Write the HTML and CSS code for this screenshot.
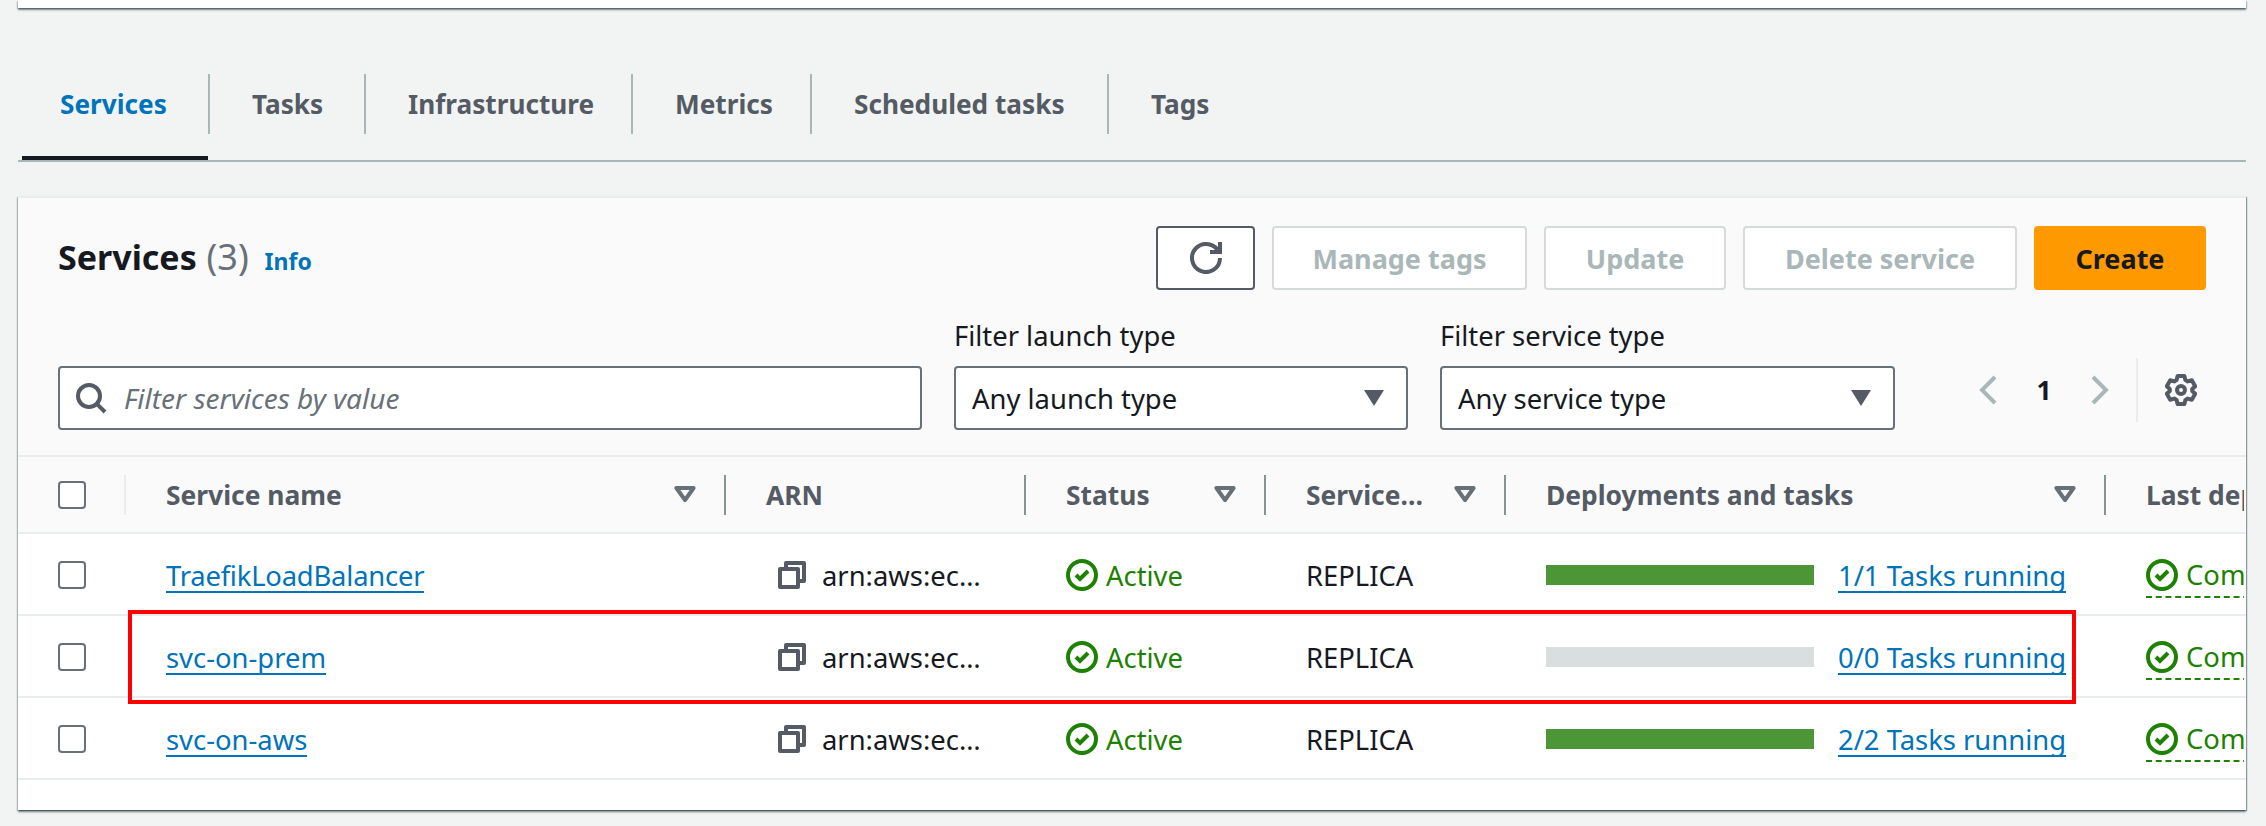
FILE: index.html
```html
<!DOCTYPE html>
<html lang="en">
<head>
<meta charset="utf-8">
<title>Services</title>
<link rel="stylesheet" href="styles.css">
</head>
<body>
<svg class="defs" width="0" height="0" aria-hidden="true">
  <symbol id="i-caret" viewBox="0 0 16 16"><path d="M3.7 4.5h8.6L8 10.5z" fill="none" stroke="currentColor" stroke-width="2" stroke-linejoin="round"/></symbol>
  <symbol id="i-copy" viewBox="0 0 16 16"><g fill="none" stroke="currentColor" stroke-width="2" stroke-linejoin="round"><path d="M2 5h9v9H2z"/><path d="M5 4V2h9v9h-2"/></g></symbol>
  <symbol id="i-ok" viewBox="0 0 16 16"><g fill="none" stroke="currentColor" stroke-width="2"><circle cx="8" cy="8" r="7"/><path d="M5 8l2 2 4-4"/></g></symbol>
  <symbol id="i-down" viewBox="0 0 20 16"><path d="M0 0h20L10 16z" fill="currentColor"/></symbol>
</svg>
<div class="topcard"></div>
<nav class="tabs">
  <a class="tab active">Services</a>
  <a class="tab">Tasks</a>
  <a class="tab">Infrastructure</a>
  <a class="tab">Metrics</a>
  <a class="tab">Scheduled tasks</a>
  <a class="tab last">Tags</a>
</nav>
<section class="card">
  <div class="actions">
    <h2 class="title">Services <span class="count">(3)</span> <a class="info">Info</a></h2>
    <button class="btn refresh" aria-label="Refresh"><svg class="ic32" viewBox="0 0 16 16"><g fill="none" stroke="currentColor" stroke-width="2"><path d="M10 5h5V0"/><path d="M15 8a7 7 0 1 1-.5-2.6"/></g></svg></button>
    <button class="btn disabled w-manage">Manage tags</button>
    <button class="btn disabled w-update">Update</button>
    <button class="btn disabled w-delete">Delete service</button>
    <button class="btn primary">Create</button>
  </div>
  <div class="filters">
    <div class="search">
      <svg class="ic32" viewBox="0 0 16 16"><g fill="none" stroke="currentColor" stroke-width="2"><circle cx="7" cy="7" r="5.5"/><path d="M15 15l-4.2-4.2"/></g></svg>
      <span class="placeholder">Filter services by value</span>
    </div>
    <div class="field">
      <label class="label">Filter launch type</label>
      <div class="select"><span>Any launch type</span><svg class="down"><use href="#i-down"/></svg></div>
    </div>
    <div class="field">
      <label class="label">Filter service type</label>
      <div class="select"><span>Any service type</span><svg class="down"><use href="#i-down"/></svg></div>
    </div>
    <div class="pager">
      <svg class="chev" viewBox="0 0 18 30"><path d="M16 2L3 15l13 13" fill="none" stroke="currentColor" stroke-width="4"/></svg>
      <span class="page">1</span>
      <svg class="chev" viewBox="0 0 18 30"><path d="M2 2l13 13L2 28" fill="none" stroke="currentColor" stroke-width="4"/></svg>
      <span class="pager-sep"></span>
      <svg class="ic32 gear" viewBox="0 0 16 16"><g fill="none" stroke="currentColor" stroke-width="2" stroke-linejoin="round"><path d="M6.3 1h3.4l.5 2 1.2.7 2-.6 1.7 3-1.5 1.4v1l1.5 1.4-1.7 3-2-.6-1.2.7-.5 2H6.3l-.5-2-1.2-.7-2 .6-1.7-3 1.5-1.4v-1L.9 6.1l1.7-3 2 .6 1.2-.7z"/><circle cx="8" cy="8" r="2"/></g></svg>
    </div>
  </div>
  <div class="grid head">
    <div class="cell check"><span class="box"></span><i class="rule light"></i></div>
    <div class="cell"><span class="grow">Service name</span><svg class="ic32 caret"><use href="#i-caret"/></svg><i class="rule"></i></div>
    <div class="cell"><span class="grow">ARN</span><i class="rule"></i></div>
    <div class="cell"><span class="grow">Status</span><svg class="ic32 caret"><use href="#i-caret"/></svg><i class="rule"></i></div>
    <div class="cell"><span class="grow">Service…</span><svg class="ic32 caret"><use href="#i-caret"/></svg><i class="rule"></i></div>
    <div class="cell"><span class="grow">Deployments and tasks</span><svg class="ic32 caret"><use href="#i-caret"/></svg><i class="rule"></i></div>
    <div class="cell clip"><span>Last deployment</span></div>
  </div>
  <div class="grid row">
    <div class="cell check"><span class="box"></span></div>
    <div class="cell"><a class="link tight">TraefikLoadBalancer</a></div>
    <div class="cell arn"><svg class="ic32 copy"><use href="#i-copy"/></svg><span>arn:aws:ec…</span></div>
    <div class="cell ok"><svg class="ic32"><use href="#i-ok"/></svg><span>Active</span></div>
    <div class="cell">REPLICA</div>
    <div class="cell"><span class="bar full"></span><a class="link">1/1 Tasks running</a></div>
    <div class="cell clip ok"><span class="dashed"><svg class="ic32"><use href="#i-ok"/></svg><span>Completed</span></span></div>
  </div>
  <div class="grid row">
    <div class="cell check"><span class="box"></span></div>
    <div class="cell"><a class="link">svc-on-prem</a></div>
    <div class="cell arn"><svg class="ic32 copy"><use href="#i-copy"/></svg><span>arn:aws:ec…</span></div>
    <div class="cell ok"><svg class="ic32"><use href="#i-ok"/></svg><span>Active</span></div>
    <div class="cell">REPLICA</div>
    <div class="cell"><span class="bar"></span><a class="link">0/0 Tasks running</a></div>
    <div class="cell clip ok"><span class="dashed"><svg class="ic32"><use href="#i-ok"/></svg><span>Completed</span></span></div>
  </div>
  <div class="grid row">
    <div class="cell check"><span class="box"></span></div>
    <div class="cell"><a class="link">svc-on-aws</a></div>
    <div class="cell arn"><svg class="ic32 copy"><use href="#i-copy"/></svg><span>arn:aws:ec…</span></div>
    <div class="cell ok"><svg class="ic32"><use href="#i-ok"/></svg><span>Active</span></div>
    <div class="cell">REPLICA</div>
    <div class="cell"><span class="bar full"></span><a class="link">2/2 Tasks running</a></div>
    <div class="cell clip ok"><span class="dashed"><svg class="ic32"><use href="#i-ok"/></svg><span>Completed</span></span></div>
  </div>
  <div class="foot"></div>
</section>
<div class="highlight"></div>
</body>
</html>
```

FILE: styles.css
```css
* { box-sizing: border-box; }
html, body { margin: 0; padding: 0; }
body {
  width: 2266px;
  height: 826px;
  overflow: hidden;
  position: relative;
  padding: 0 20px 0 18px;
  background: #f2f3f3;
  color: #16191f;
  font-family: "Noto Sans", "Open Sans", sans-serif;
  font-size: 27.4px;
}
.defs { display: block; }
.ic32 { width: 32px; height: 32px; flex: none; display: block; }

.topcard {
  height: 8px;
  background: #fff;
  box-shadow: 0 2px 2px rgba(0,28,36,.5), 1px 1px 1px rgba(0,28,36,.15), -1px 1px 1px rgba(0,28,36,.15);
}

.tabs {
  display: grid;
  grid-template-columns: 192px 156px 267px 179px 297px 1fr;
  margin-top: 66px;
  height: 88px;
  border-bottom: 2px solid #aab7b8;
  font-size: 26.2px;
  font-weight: 700;
  color: #545b64;
}
.tab {
  height: 60px;
  padding-left: 42px;
  line-height: 60px;
  border-right: 2px solid #aab7b8;
  position: relative;
}
.tab.last { border-right: 0; }
.tab.active { color: #0073bb; }
.tab.active::after {
  content: "";
  position: absolute;
  left: 4px;
  right: 0;
  top: 82px;
  height: 4px;
  background: #16191f;
}

.card {
  margin-top: 34px;
  height: 614px;
  background: #fff;
  border-top: 2px solid #eaeded;
  box-shadow: 0 2px 2px rgba(0,28,36,.5), 1px 1px 1px rgba(0,28,36,.3), -1px 1px 1px rgba(0,28,36,.15);
}
.actions {
  display: flex;
  gap: 17px;
  align-items: stretch;
  height: 92px;
  padding: 28px 40px 0;
  background: #fafafa;
}
.title {
  flex: 1;
  margin: 0;
  font-size: 34px;
  line-height: 62px;
  font-weight: 700;
  white-space: nowrap;
}
.count { font-weight: 400; color: #687078; font-size: 36px; margin-left: 1px; }
.info { font-size: 23px; color: #0073bb; margin-left: 7px; }
.btn {
  height: 64px;
  padding: 0;
  border: 2px solid #545b64;
  border-radius: 4px;
  background: #fff;
  color: #545b64;
  font: 700 27px "Noto Sans", "Open Sans", sans-serif;
  display: flex;
  align-items: center;
  justify-content: center;
}
.refresh { width: 99px; }
.disabled { border-color: #d5dbdb; color: #aab7b8; }
.w-manage { width: 255px; }
.w-update { width: 182px; }
.w-delete { width: 274px; }
.primary { width: 172px; background: #f90; border-color: #f90; color: #16191f; }

.filters {
  display: flex;
  align-items: flex-end;
  gap: 32px;
  height: 165px;
  padding: 0 0 25px 40px;
  background: #fafafa;
}
.search, .select {
  height: 64px;
  background: #fff;
  border: 2px solid #687078;
  border-radius: 4px;
  display: flex;
  align-items: center;
}
.search { width: 864px; padding-left: 15px; color: #545b64; gap: 17px; }
.placeholder { font-style: italic; color: #687078; font-size: 28px; }
.field { width: 454px; }
.field + .field { width: 455px; }
.label { display: block; height: 45px; line-height: 30px; }
.select { padding: 0 22px 0 16px; justify-content: space-between; }
.down { width: 20px; height: 16px; color: #545b64; }

.pager {
  display: flex;
  align-items: center;
  height: 64px;
  margin: 0 0 8px 52px;
  font-weight: 700;
  font-size: 26.4px;
}
.chev { width: 18px; height: 30px; color: #aab7b8; flex: none; }
.page { width: 94px; text-align: center; }
.pager-sep { width: 2px; height: 64px; margin: 0 27px 0 27px; background: #eaeded; }
.gear { color: #545b64; }

.grid {
  display: grid;
  grid-template-columns: 108px 600px 300px 240px 240px 600px 138px;
}
.cell {
  display: flex;
  align-items: center;
  padding-left: 40px;
  white-space: nowrap;
  min-width: 0;
}
.head {
  height: 79px;
  background: #fafafa;
  border-top: 2px solid #eaeded;
  border-bottom: 2px solid #eaeded;
  font-size: 26.4px;
  font-weight: 700;
  color: #545b64;
}
.grow { flex: 1; }
.caret { color: #687078; margin-right: 23px; }
.rule { flex: none; width: 2px; height: 40px; background: #879596; }
.rule.light { background: #eaeded; }
.check { justify-content: space-between; }
.box {
  width: 28px;
  height: 28px;
  border: 2px solid #687078;
  border-radius: 4px;
  background: #fff;
}
.row { height: 82px; padding-top: 2px; border-bottom: 2px solid #eaeded; }
.link {
  display: inline-block;
  padding-top: 3px;
  line-height: 31px;
  color: #0073bb;
  border-bottom: 2px solid #0073bb;
}
.tight { letter-spacing: -0.2px; }
.arn { padding-left: 50px; gap: 14px; }
.ok { color: #1d8102; gap: 8px; }
.copy { color: #545b64; }
.bar { flex: none; width: 268px; height: 20px; margin-right: 24px; background: #d9dede; }
.bar.full { background: #4d9638; }
.clip { overflow: hidden; }
.dashed {
  display: flex;
  align-items: center;
  gap: 8px;
  height: 45px;
  margin-top: 1px;
  margin-right: -60px;
  border-bottom: 2px dashed #1d8102;
}
.foot { height: 28px; }
.highlight {
  position: absolute;
  left: 128px;
  top: 610px;
  width: 1948px;
  height: 94px;
  border: 4px solid #f00;
}
```
